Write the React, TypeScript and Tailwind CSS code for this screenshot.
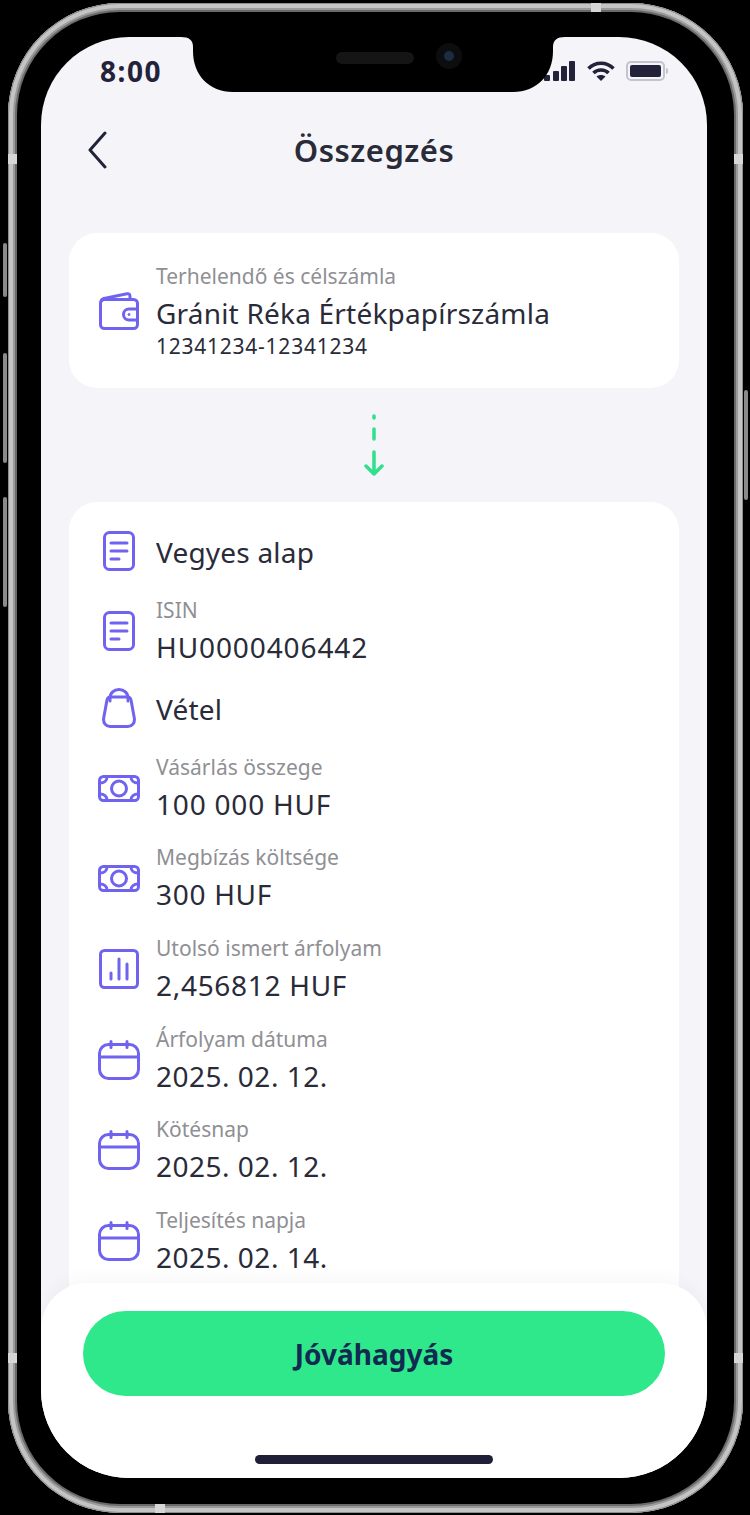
import React from 'react'

const font = 'font-["Noto_Sans","Lato",sans-serif]'

function DocIcon() {
  return (
    <svg width="32" height="40" viewBox="0 0 32 40" fill="none" stroke="#6f63ef" strokeWidth="3" strokeLinecap="round">
      <rect x="1.500" y="1.500" width="29" height="37" rx="5" />
      <path d="M8 12h16M8 20h16M8 28h8" />
    </svg>
  )
}

function BagIcon() {
  return (
    <svg width="34" height="40" viewBox="0 0 34 40" fill="none" stroke="#6f63ef" strokeWidth="3" strokeLinejoin="round" strokeLinecap="round">
      <path d="M8.500 9h17c2 0 3 1 3.500 3l3.300 18c.8 5-2.300 8.500-6.300 8.500H8c-4 0-7.100-3.500-6.300-8.500L5 12c.5-2 1.500-3 3.500-3z" />
      <path d="M8 13v-3c0-5 4-8.500 9-8.500s9 3.500 9 8.500v3" />
    </svg>
  )
}

function MoneyIcon() {
  return (
    <svg width="42" height="27" viewBox="0 0 42 27" fill="none" stroke="#6f63ef" strokeWidth="3" strokeLinecap="round">
      <rect x="1.500" y="1.500" width="39" height="24" rx="4" />
      <circle cx="21" cy="13.500" r="7.500" />
      <path d="M9 2c0 3.500-3 6-7 6M33 2c0 3.500 3 6 7 6M9 25c0-3.500-3-6-7-6M33 25c0-3.500 3-6 7-6" />
    </svg>
  )
}

function ChartIcon() {
  return (
    <svg width="40" height="40" viewBox="0 0 40 40" fill="none" stroke="#6f63ef" strokeWidth="3" strokeLinecap="round">
      <rect x="1.500" y="1.500" width="37" height="37" rx="4" />
      <path d="M12 24v6M20 10v20M28 15v15" />
    </svg>
  )
}

function CalendarIcon() {
  return (
    <svg width="42" height="40" viewBox="0 0 42 40" fill="none" stroke="#6f63ef" strokeWidth="3" strokeLinecap="round">
      <rect x="1.500" y="4.500" width="39" height="34" rx="9" />
      <path d="M2 17h38M13 1.500v6M29 1.500v6" />
    </svg>
  )
}

function WalletIcon() {
  return (
    <svg width="40" height="38" viewBox="0 0 40 38" fill="none" stroke="#6f63ef" strokeWidth="3" strokeLinejoin="round">
      <path d="M2 10c0-2 1-3 3-3.500L28 1.800c2-.4 3 .6 3 2.700V7" />
      <rect x="1.500" y="7.500" width="37" height="29" rx="4" />
      <path d="M38 17h-8a5.500 5.500 0 0 0 0 11h8" />
      <circle cx="30" cy="22.500" r="1" fill="#6f63ef" strokeWidth="1" />
    </svg>
  )
}

function Label({ children }: { children: React.ReactNode }) {
  return <div className="h-[30px] text-[21px] leading-[30px] text-[#8f8f94]">{children}</div>
}

function Value({ children, cls }: { children: React.ReactNode; cls: string }) {
  return <div className={`h-[46px] text-[28px] leading-[44px] text-[#2a2b38] ${cls}`}>{children}</div>
}

const rows = [
  { icon: <DocIcon />, value: 'Vegyes alap', cls: 'mt-0', track: 'tracking-[0.2px]' },
  { icon: <DocIcon />, label: 'ISIN', value: 'HU0000406442', cls: 'mt-[19px]', track: 'tracking-[0.9px]' },
  { icon: <BagIcon />, value: 'Vétel', cls: 'mt-[16px]', track: 'tracking-[0.2px]' },
  { icon: <MoneyIcon />, label: 'Vásárlás összege', value: '100 000 HUF', cls: 'mt-[19px]', track: 'tracking-[0.8px]' },
  { icon: <MoneyIcon />, label: 'Megbízás költsége', value: '300 HUF', cls: 'mt-[14px]', track: 'tracking-[0.7px]' },
  { icon: <ChartIcon />, label: 'Utolsó ismert árfolyam', value: '2,456812 HUF', cls: 'mt-[15px]', track: 'tracking-[0.7px]' },
  { icon: <CalendarIcon />, label: 'Árfolyam dátuma', value: '2025. 02. 12.', cls: 'mt-[15px]', track: 'tracking-[0.5px]' },
  { icon: <CalendarIcon />, label: 'Kötésnap', value: '2025. 02. 12.', cls: 'mt-[14px]', track: 'tracking-[0.5px]' },
  { icon: <CalendarIcon />, label: 'Teljesítés napja', value: '2025. 02. 14.', cls: 'mt-[15px]', track: 'tracking-[0.5px]' },
]

export default function App() {
  return (
    <div className={`relative w-[750px] h-[1515px] bg-black overflow-hidden pt-[3px] pl-[8px] ${font}`}>
      {/* side buttons */}
      <div className="absolute left-[3px] top-[243px] w-[4px] h-[54px] rounded-[2px] bg-[#8a8a8a]" />
      <div className="absolute left-[3px] top-[353px] w-[4px] h-[110px] rounded-[2px] bg-[#8a8a8a]" />
      <div className="absolute left-[3px] top-[497px] w-[4px] h-[110px] rounded-[2px] bg-[#8a8a8a]" />
      <div className="absolute left-[744px] top-[390px] w-[4px] h-[110px] rounded-[2px] bg-[#8a8a8a]" />

      {/* device frame */}
      <div className="relative w-[735px] h-[1510px] rounded-[112px] pt-[34px] pl-[33px] shadow-[inset_0_0_0_1px_#8c8c8c,inset_0_0_0_5px_#c4c4c4,inset_0_0_0_7px_#9a9a9a,inset_0_0_0_9px_#6a6a6a]">
        {/* antenna bands */}
        <div className="absolute left-[583px] top-0 w-[10px] h-[9px] bg-[#d6d6d6]" />
        <div className="absolute left-[147px] bottom-0 w-[10px] h-[9px] bg-[#d6d6d6]" />
        <div className="absolute left-0 top-[151px] w-[9px] h-[10px] bg-[#d6d6d6]" />
        <div className="absolute right-0 top-[151px] w-[9px] h-[10px] bg-[#d6d6d6]" />
        <div className="absolute left-0 bottom-[150px] w-[9px] h-[10px] bg-[#d6d6d6]" />
        <div className="absolute right-0 bottom-[150px] w-[9px] h-[10px] bg-[#d6d6d6]" />

        {/* screen */}
        <div className="relative w-[666px] h-[1441px] rounded-[88px] overflow-hidden bg-[#f4f4f9]">
          {/* status bar */}
          <div className="flex items-center justify-between h-[68px] pl-[59px] pr-[39px]">
            <span className="text-[28px] font-bold leading-none tracking-[1.5px] text-[#22233a]">8:00</span>
            <div className="flex items-center gap-[11px]">
              <svg width="32" height="20" viewBox="0 0 32 20" fill="#22233a">
                <rect x="0" y="14" width="6" height="6" rx="1" />
                <rect x="9" y="10" width="6" height="10" rx="1" />
                <rect x="17" y="5" width="6" height="15" rx="1" />
                <rect x="25" y="0" width="6" height="20" rx="1" />
              </svg>
              <svg width="28" height="20" viewBox="0 0 28 20" fill="none" stroke="#22233a" strokeWidth="3.600">
                <path d="M1.500 7.500C8.500 .500 19.500 .500 26.500 7.500" />
                <path d="M6.500 12C10.500 8 17.500 8 21.500 12" />
                <path d="M14 20l-4.500-4.500c2.500-2 6.500-2 9 0z" fill="#22233a" stroke="none" />
              </svg>
              <div className="flex items-center gap-[1px]">
                <div className="w-[39px] h-[20px] rounded-[5px] border-2 border-[#c4c4cf] p-[2px]">
                  <div className="w-full h-full rounded-[2px] bg-[#22233a]" />
                </div>
                <div className="w-[2px] h-[6px] rounded-r-[2px] bg-[#c4c4cf]" />
              </div>
            </div>
          </div>

          {/* header */}
          <div className="relative flex items-center justify-center mt-[17px] h-[56px]">
            <svg className="absolute left-[46px] top-[9px]" width="22" height="38" viewBox="0 0 22 38" fill="none" stroke="#22233a" strokeWidth="3" strokeLinecap="round" strokeLinejoin="round">
              <path d="M18 2L3 19l15 17" />
            </svg>
            <h1 className="text-[31px] font-semibold leading-none text-[#2a2b38] tracking-[0.5px]">Összegzés</h1>
          </div>

          {/* account card */}
          <div className="mx-[28px] mt-[55px] h-[155px] rounded-[28px] bg-white flex items-center pl-[29px] gap-[16px]">
            <div className="w-[42px] flex justify-center">
              <WalletIcon />
            </div>
            <div>
              <div className="h-[28px] text-[21px] leading-[28px] text-[#8f8f94]">Terhelendő és célszámla</div>
              <div className="h-[48px] text-[28px] leading-[46px] text-[#2a2b38] tracking-[0.2px]">Gránit Réka Értékpapírszámla</div>
              <div className="h-[28px] -mt-[6px] text-[21px] leading-[28px] text-[#2a2b38] tracking-[0.75px]">12341234-12341234</div>
            </div>
          </div>

          {/* transfer arrow */}
          <div className="h-[114px] flex items-center justify-center">
            <svg width="22" height="62" viewBox="0 0 22 62" fill="none" stroke="#2fe08c" strokeWidth="3.500" strokeLinecap="round" strokeLinejoin="round">
              <path d="M11 2v2M11 15v10M11 38v22M3 52l8 8 8-8" />
            </svg>
          </div>

          {/* details card */}
          <div className="mx-[28px] rounded-[28px] bg-white pt-[28px] pl-[29px] h-[900px]">
            {rows.map((row, i) => (
              <div key={i} className={`flex items-center gap-[16px] ${row.cls}`}>
                <div className="w-[42px] flex justify-center pb-[4px]">{row.icon}</div>
                <div>
                  {row.label && <Label>{row.label}</Label>}
                  <Value cls={row.track}>{row.value}</Value>
                </div>
              </div>
            ))}
          </div>

          {/* notch */}
          <svg className="absolute left-0 top-0" width="666" height="56" viewBox="0 0 666 56" fill="#000">
            <path d="M140 0C148 0 152 3 152 10V14C152 38 168 55 192 55H472C496 55 512 38 512 14V10C512 3 516 0 524 0Z" />
            <rect x="295" y="15" width="78" height="12" rx="6" fill="#151515" />
            <circle cx="408" cy="19" r="13" fill="#0d0d10" />
            <circle cx="408" cy="19" r="5" fill="#1c2d42" />
          </svg>

          {/* bottom sheet */}
          <div className="absolute left-0 bottom-0 w-full h-[195px] rounded-t-[46px] bg-white px-[42px] pt-[28px] shadow-[0_-6px_16px_rgba(0,0,0,0.03)]">
            <button className="w-full h-[85px] rounded-full bg-[#2fe88c] text-[28px] font-bold text-[#122a50]">Jóváhagyás</button>
            <div className="mx-auto mt-[59px] w-[238px] h-[9px] rounded-full bg-[#1f2038]" />
          </div>
        </div>
      </div>
    </div>
  )
}
